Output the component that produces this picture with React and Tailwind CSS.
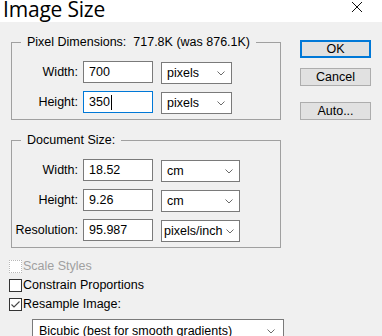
import React from "react";

const font = { fontFamily: '"Liberation Sans", Arial, sans-serif' };

function Chevron() {
  return (
    <svg width="8" height="5" viewBox="0 0 8 5" className="shrink-0">
      <path d="M0.5 0.5 L4 4 L7.5 0.5" fill="none" stroke="#6b6b6b" strokeWidth="1" />
    </svg>
  );
}

function Select({ value, w, tight }) {
  return (
    <div
      className={`h-[22px] ${w} border border-[#7a7a7a] bg-white flex items-center justify-between ${
        tight ? "pl-[2px] pr-[5px]" : "pl-[5px] pr-[6px]"
      } text-[12.5px] text-black`}
    >
      <span className="leading-none whitespace-nowrap">{value}</span>
      <Chevron />
    </div>
  );
}

function Input({ value, focused }) {
  return (
    <div className={`h-[22px] w-[70px] border ${focused ? "border-[#0078d7]" : "border-[#7a7a7a]"} bg-white flex items-center pl-[5px] text-[12.5px] text-black`}>
      <span className="leading-none">{value}</span>
      {focused && <span className="w-px h-[15px] bg-black ml-[1px]" />}
    </div>
  );
}

function Row({ label, value, unit, selW, focused, tight }) {
  return (
    <div className="flex items-start h-[22px]">
      <div className="w-[66px] h-[22px] flex items-center justify-end text-[12.5px] text-black">{label}</div>
      <div className="ml-[5px]">
        <Input value={value} focused={focused} />
      </div>
      <div className="ml-[8px] pt-[1px]">
        <Select value={unit} w={selW} tight={tight} />
      </div>
    </div>
  );
}

function Group({ title, children, className }) {
  return (
    <fieldset className={`border border-[#a0a0a0] w-[270px] ${className || ""}`}>
      <legend className="ml-[9px] px-[6px] text-[12.5px] leading-[16px] text-black whitespace-pre">{title}</legend>
      <div className="flex flex-col gap-[8px] pt-[11px] pb-[6px]">{children}</div>
    </fieldset>
  );
}

function Checkbox({ checked, disabled, label }) {
  return (
    <div className="flex items-center h-[13px]">
      <div
        className={`w-[13px] h-[13px] bg-white flex items-center justify-center shrink-0 ${
          disabled ? "border border-dotted border-[#b8b8b8]" : "border border-[#333333]"
        }`}
      >
        {checked && (
          <svg width="11" height="11" viewBox="0 0 11 11">
            <path d="M1.5 5.5 L4 8 L9.5 2.5" fill="none" stroke="#444444" strokeWidth="1.1" />
          </svg>
        )}
      </div>
      <span className={`ml-[1px] text-[12.5px] leading-none ${disabled ? "text-[#a0a0a0]" : "text-black"}`}>{label}</span>
    </div>
  );
}

function Button({ children, primary, className }) {
  return (
    <div
      className={`w-[71px] h-[18px] bg-[#e1e1e1] flex items-center justify-center text-[12.5px] text-black ${
        primary ? "border-2 border-[#0078d7]" : "border border-[#adadad]"
      } ${className || ""}`}
    >
      {children}
    </div>
  );
}

export default function App() {
  return (
    <div className="w-[382px] h-[336px] bg-[#f0f0f0] overflow-hidden flex flex-col" style={font}>
      <div className="h-[22px] bg-white flex items-start justify-between shrink-0 overflow-hidden">
        <div
          className="text-[21px] leading-[19px] text-black pl-[3px] tracking-[-0.2px]"
          style={{ fontFamily: '"Open Sans", "Liberation Sans", sans-serif' }}
        >
          Image Size
        </div>
        <svg width="12" height="12" viewBox="0 0 12 12" className="mr-[19px] mt-[1px]">
          <path d="M1 1 L11 11 M11 1 L1 11" stroke="#111" strokeWidth="1" />
        </svg>
      </div>
      <div className="flex pl-[11px] pt-[12px]">
        <div className="flex flex-col w-[272px] shrink-0">
          <Group title="Pixel Dimensions:  717.8K (was 876.1K)">
            <Row label="Width:" value="700" unit="pixels" selW="w-[71px]" />
            <Row label="Height:" value="350" unit="pixels" selW="w-[71px]" focused />
          </Group>
          <Group title="Document Size:" className="mt-[12px]">
            <Row label="Width:" value="18.52" unit="cm" selW="w-[79px]" />
            <Row label="Height:" value="9.26" unit="cm" selW="w-[79px]" />
            <Row label="Resolution:" value="95.987" unit="pixels/inch" selW="w-[79px]" tight />
          </Group>
          <div className="flex flex-col gap-[6px] mt-[12px] -ml-[2px]">
            <Checkbox disabled label="Scale Styles" />
            <Checkbox label="Constrain Proportions" />
            <Checkbox checked label="Resample Image:" />
          </div>
          <div className="mt-[8px] ml-[21px] w-[252px] h-[24px] border border-[#7a7a7a] bg-white flex items-center justify-between pl-[6px] pr-[8px] text-[12.5px] text-black shrink-0">
            <span className="leading-none">Bicubic (best for smooth gradients)</span>
            <Chevron />
          </div>
        </div>
        <div className="flex flex-col ml-[17px] pt-[6px]">
          <Button primary>OK</Button>
          <Button className="mt-[10px]">Cancel</Button>
          <Button className="mt-[16px]">Auto...</Button>
        </div>
      </div>
    </div>
  );
}
